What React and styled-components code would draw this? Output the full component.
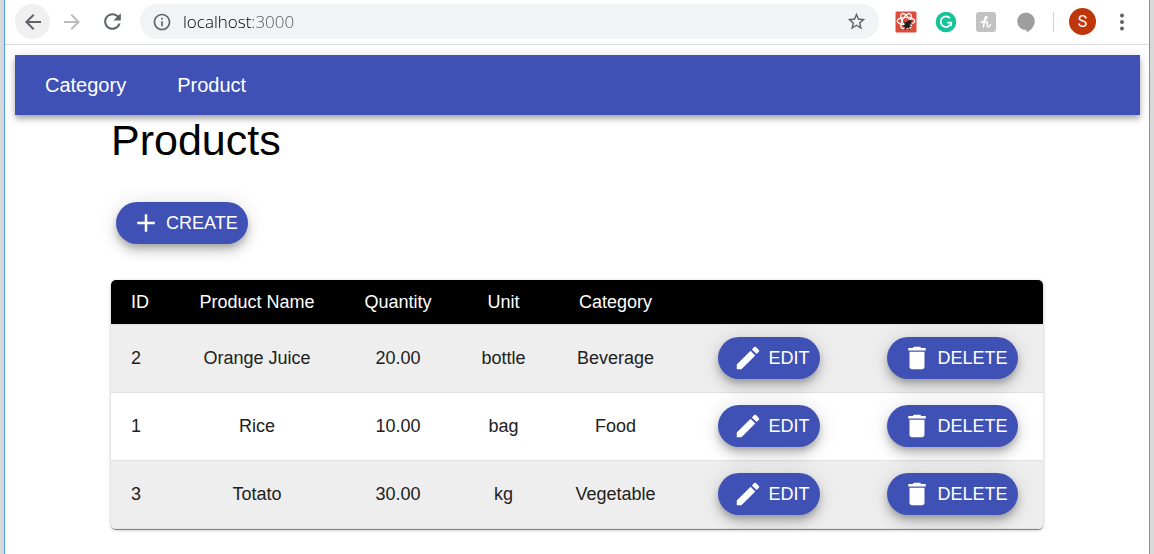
import React from "react";
import styled, { createGlobalStyle } from "styled-components";

const GlobalStyle = createGlobalStyle`
  *, *::before, *::after { box-sizing: border-box; }
  body {
    margin: 0;
    background: #fff;
    font-family: "Liberation Sans", Arial, sans-serif;
  }
`;

const primary = "#3f51b5";

const Frame = styled.div`
  min-height: 100vh;
  padding: 0 4px;
  background: #d9d9d9;
`;

const Window = styled.div`
  min-height: 100vh;
  background: #fff;
  border: solid #4f9df0;
  border-width: 0 1px;
`;

const Toolbar = styled.header`
  display: flex;
  align-items: center;
  height: 45px;
  padding: 0 7px 1px 10px;
  border-bottom: 1px solid #dadce0;
`;

const ToolButton = styled.button`
  display: flex;
  align-items: center;
  justify-content: center;
  flex: none;
  width: ${(p) => p.$width || 40}px;
  height: 35px;
  padding: 0;
  border: 0;
  background: none;
  color: ${(p) => p.$color || "#5f6368"};
`;

const BackButton = styled(ToolButton)`
  border-radius: 50%;
  background: #f0f0f0;
`;

const Omnibox = styled.div`
  display: flex;
  align-items: center;
  flex: 1;
  min-width: 0;
  height: 35px;
  margin: 0 7px 0 8px;
  padding: 0 3px 0 12px;
  border-radius: 18px;
  background: #f1f3f4;
  color: #5f6368;
`;

const Address = styled.input`
  flex: 1;
  min-width: 0;
  height: 28px;
  margin-left: 11px;
  padding: 0;
  border: 0;
  outline: 0;
  background: linear-gradient(90deg, #000 70px, #4f5357 70px);
  background-clip: text;
  -webkit-text-fill-color: transparent;
  font: 300 17px/28px "Open Sans", "Noto Sans", sans-serif;
`;

const Separator = styled.span`
  width: 1px;
  height: 20px;
  margin: 0 7px;
  background: #cdcfd2;
`;

const Avatar = styled.button`
  flex: none;
  width: 27px;
  height: 27px;
  margin: 0 6px 0 8px;
  padding: 0;
  border: 0;
  border-radius: 50%;
  background: #bf360c;
  color: #fff;
  font: 16px/27px Roboto, sans-serif;
`;

const AppBar = styled.nav`
  display: flex;
  align-items: center;
  gap: 51px;
  height: 60px;
  margin: 10px 9px 0 10px;
  padding: 0 30px;
  background: ${primary};
  box-shadow:
    0 3px 5px -1px rgba(0, 0, 0, 0.2),
    0 5px 6px rgba(0, 0, 0, 0.14),
    0 1px 12px rgba(0, 0, 0, 0.12);
`;

const NavLink = styled.a`
  color: #fff;
  font-size: 20px;
  line-height: 24px;
  text-decoration: none;
`;

const Main = styled.main`
  padding: 0 106px 24px;
`;

const Title = styled.h1`
  margin: 0;
  font-size: 43px;
  font-weight: 400;
  line-height: 50px;
  color: #000;
`;

const Actions = styled.div`
  padding: 37px 5px 36px;
`;

const Fab = styled.button`
  display: inline-flex;
  align-items: center;
  gap: 5px;
  height: 42px;
  padding: 0 10px 0 15px;
  border: 0;
  border-radius: 21px;
  background: ${primary};
  color: #fff;
  font: 18px/30px "Liberation Sans", Arial, sans-serif;
  text-transform: uppercase;
  vertical-align: top;
  box-shadow:
    0 4px 6px -1px rgba(0, 0, 0, 0.2),
    0 8px 12px rgba(0, 0, 0, 0.14),
    0 1px 22px rgba(0, 0, 0, 0.12);
`;

const Paper = styled.div`
  overflow: hidden;
  border-radius: 5px;
  box-shadow:
    0 1px 4px rgba(0, 0, 0, 0.2),
    0 1px 1px rgba(0, 0, 0, 0.3),
    0 2px 1px -1px rgba(0, 0, 0, 0.2);
`;

const Table = styled.table`
  width: 100%;
  table-layout: fixed;
  border-collapse: separate;
  border-spacing: 0;
  font-size: 18px;
  line-height: 24px;
`;

const Col = styled.col`
  width: ${(p) => p.$width}px;
`;

const HeadCell = styled.th`
  height: 45px;
  padding: 0;
  padding-left: ${(p) => (p.$start ? 20 : 0)}px;
  border-bottom: 1px solid #e0e0e0;
  background: #000;
  background-clip: padding-box;
  color: #fff;
  font-weight: 400;
  text-align: ${(p) => (p.$start ? "left" : "center")};
`;

const Row = styled.tr`
  &:nth-child(odd) {
    background: #eee;
  }
`;

const Cell = styled.td`
  height: 68px;
  padding: 0 0 1px;
  padding-left: ${(p) => (p.$start ? 20 : 0)}px;
  border-bottom: 1px solid #e0e0e0;
  color: #212121;
  text-align: ${(p) => (p.$start ? "left" : "center")};
`;

const paths = {
  back: "M20 11H7.83l5.59-5.59L12 4l-8 8 8 8 1.41-1.41L7.83 13H20v-2z",
  forward: "M12 4l-1.41 1.41L16.17 11H4v2h12.17l-5.58 5.59L12 20l8-8z",
  reload:
    "M17.65 6.35C16.2 4.9 14.21 4 12 4c-4.42 0-7.99 3.58-7.99 8s3.57 8 7.99 8c3.73 0 6.84-2.55 7.73-6h-2.08c-.82 2.33-3.04 4-5.65 4-3.31 0-6-2.69-6-6s2.69-6 6-6c1.66 0 3.14.69 4.22 1.78L13 11h7V4l-2.35 2.35z",
  info: "M11 17h2v-6h-2v6zm1-15C6.48 2 2 6.48 2 12s4.48 10 10 10 10-4.48 10-10S17.52 2 12 2zm0 18c-4.41 0-8-3.59-8-8s3.59-8 8-8 8 3.59 8 8-3.59 8-8 8zM11 9h2V7h-2v2z",
  star: "M22 9.24l-7.19-.62L12 2 9.19 8.63 2 9.24l5.46 4.73L5.82 21 12 17.27 18.18 21l-1.63-7.03L22 9.24zM12 15.4l-3.76 2.27 1-4.28-3.32-2.88 4.38-.38L12 6.1l1.71 4.04 4.38.38-3.32 2.88 1 4.28L12 15.4z",
  add: "M19 13h-6v6h-2v-6H5v-2h6V5h2v6h6v2z",
  edit: "M3 17.25V21h3.75L17.81 9.94l-3.75-3.75L3 17.25zM20.71 7.04c.39-.39.39-1.02 0-1.41l-2.34-2.34c-.39-.39-1.02-.39-1.41 0l-1.83 1.83 3.75 3.75 1.83-1.83z",
  remove:
    "M6 19c0 1.1.9 2 2 2h8c1.1 0 2-.9 2-2V7H6v12zM19 4h-3.5l-1-1h-5l-1 1H5v2h14V4z",
};

const Svg = styled.svg`
  display: block;
  flex: none;
  fill: currentColor;
`;

function Icon({ name, size = 30 }) {
  return (
    <Svg width={size} height={size} viewBox="0 0 24 24" aria-hidden="true">
      <path d={paths[name]} />
    </Svg>
  );
}

function DevtoolsIcon() {
  return (
    <Svg width="22" height="22" viewBox="0 0 22 22" aria-hidden="true">
      <rect x="0.5" y="0.5" width="21" height="21" rx="1.5" fill="#dd4b39" />
      <g fill="none" stroke="#fff" strokeWidth="1.3">
        <ellipse cx="11" cy="10" rx="8.8" ry="3.6" />
        <ellipse cx="11" cy="10" rx="8.4" ry="3.6" transform="rotate(60 11 10)" />
        <ellipse cx="11" cy="10" rx="8.4" ry="3.6" transform="rotate(120 11 10)" />
      </g>
      <g stroke="#241a18" strokeLinecap="round">
        <ellipse cx="12.4" cy="13.6" rx="1.9" ry="3.6" fill="#241a18" transform="rotate(35 12.4 13.6)" />
        <circle cx="14.8" cy="10.4" r="1.2" fill="#241a18" />
        <path d="M9 11.5l3 1M8.500 14.500l2.500-.5M10 18.500l.5-2.500M14 12.500l3 .5M13.500 14.500l2.500 1M13 15.500l1.500 3" fill="none" />
      </g>
    </Svg>
  );
}

function GrammarIcon() {
  return (
    <Svg width="22" height="22" viewBox="0 0 22 22" aria-hidden="true">
      <circle cx="11" cy="11" r="10.3" fill="#15c39a" />
      <path
        d="M15 7.2A5.3 5.3 0 1 0 16.2 11.7H12.3M16.2 11.7V15.2"
        fill="none"
        stroke="#fff"
        strokeWidth="1.7"
      />
    </Svg>
  );
}

function CouponIcon() {
  return (
    <Svg width="22" height="22" viewBox="0 0 22 22" aria-hidden="true">
      <rect x="1" y="1" width="20" height="20" rx="3" fill="#c2c2c2" />
      <path
        d="M6 11.5C8.5 11 12.2 8 11.8 6C11.300 4.500 9.800 6 9.300 9.500L8.500 16M8.800 13.500C9.800 10.800 12.400 9.800 12.400 11.600C12.400 13 11.600 15.800 13.100 15.900C14.300 15.900 15 14.800 15.500 13.500"
        fill="none"
        stroke="#fff"
        strokeWidth="1.5"
        strokeLinecap="round"
      />
    </Svg>
  );
}

function BubbleIcon() {
  return (
    <Svg width="22" height="22" viewBox="0 0 22 22" aria-hidden="true">
      <path
        d="M11 1.5a8.8 8.800 0 0 0 0 17.600h.6v2.400c4.500-2.300 8.200-6.300 8.200-11.200A8.800 8.800 0 0 0 11 1.500z"
        fill="#9e9e9e"
      />
    </Svg>
  );
}

function DotsIcon() {
  return (
    <Svg width="6" height="18" viewBox="0 0 6 18" aria-hidden="true">
      <circle cx="3" cy="2.5" r="2" />
      <circle cx="3" cy="9" r="2" />
      <circle cx="3" cy="15.5" r="2" />
    </Svg>
  );
}

const columns = [
  { label: "ID", width: 59 },
  { label: "Product Name", width: 174 },
  { label: "Quantity", width: 108 },
  { label: "Unit", width: 103 },
  { label: "Category", width: 121 },
  { label: "", width: 186 },
  { label: "", width: 181 },
];

const products = [
  { id: 2, name: "Orange Juice", quantity: "20.00", unit: "bottle", category: "Beverage" },
  { id: 1, name: "Rice", quantity: "10.00", unit: "bag", category: "Food" },
  { id: 3, name: "Totato", quantity: "30.00", unit: "kg", category: "Vegetable" },
];

function BrowserToolbar() {
  return (
    <Toolbar>
      <BackButton $width={35} aria-label="Back"><Icon name="back" size={24} /></BackButton>
      <ToolButton $width={43} $color="#babcbe" aria-label="Forward"><Icon name="forward" size={24} /></ToolButton>
      <ToolButton $width={39} aria-label="Reload"><Icon name="reload" size={25} /></ToolButton>
      <Omnibox>
        <Icon name="info" size={20} />
        <Address type="text" aria-label="Address" defaultValue="localhost:3000" />
        <ToolButton aria-label="Bookmark this page"><Icon name="star" size={21} /></ToolButton>
      </Omnibox>
      <ToolButton aria-label="Developer tools"><DevtoolsIcon /></ToolButton>
      <ToolButton aria-label="Grammar checker"><GrammarIcon /></ToolButton>
      <ToolButton aria-label="Coupons"><CouponIcon /></ToolButton>
      <ToolButton aria-label="Chat"><BubbleIcon /></ToolButton>
      <Separator />
      <Avatar>S</Avatar>
      <ToolButton aria-label="Menu"><DotsIcon /></ToolButton>
    </Toolbar>
  );
}

export default function App() {
  return (
    <Frame>
      <GlobalStyle />
      <Window>
        <BrowserToolbar />
        <AppBar>
          <NavLink href="#category">Category</NavLink>
          <NavLink href="#product">Product</NavLink>
        </AppBar>
        <Main>
          <Title>Products</Title>
          <Actions>
            <Fab><Icon name="add" />Create</Fab>
          </Actions>
          <Paper>
            <Table>
              <colgroup>
                {columns.map((c, i) => <Col key={i} $width={c.width} />)}
              </colgroup>
              <thead>
                <tr>
                  {columns.map((c, i) => (
                    <HeadCell key={i} $start={i === 0}>{c.label}</HeadCell>
                  ))}
                </tr>
              </thead>
              <tbody>
                {products.map((p) => (
                  <Row key={p.id}>
                    <Cell $start>{p.id}</Cell>
                    <Cell>{p.name}</Cell>
                    <Cell>{p.quantity}</Cell>
                    <Cell>{p.unit}</Cell>
                    <Cell>{p.category}</Cell>
                    <Cell><Fab><Icon name="edit" />Edit</Fab></Cell>
                    <Cell><Fab><Icon name="remove" />Delete</Fab></Cell>
                  </Row>
                ))}
              </tbody>
            </Table>
          </Paper>
        </Main>
      </Window>
    </Frame>
  );
}
